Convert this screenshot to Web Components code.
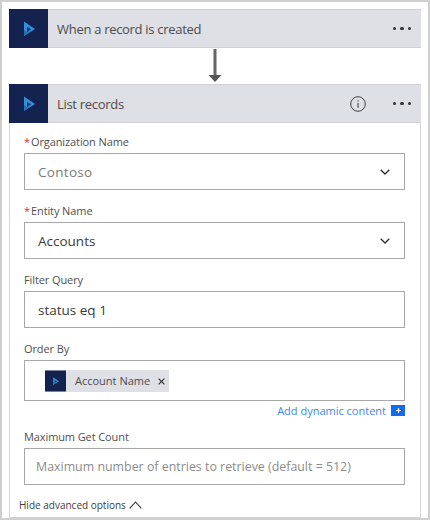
<!DOCTYPE html>
<html>
<head>
<meta charset="utf-8">
<title>List records</title>
<style>
    html, body { margin: 0; padding: 0; background: #fff; }
    body { width: 430px; height: 520px; overflow: hidden; font-family: "Open Sans", "Noto Sans", sans-serif; }
</style>
</head>
<body>
<flow-window>
    <flow-card title="When a record is created"></flow-card>
    <flow-arrow></flow-arrow>
    <flow-card title="List records" info open>
        <flow-field label="Organization Name" required select muted>Contoso</flow-field>
        <flow-field label="Entity Name" required select>Accounts</flow-field>
        <flow-field label="Filter Query">status eq 1</flow-field>
        <flow-field label="Order By" tall>
            <flow-token>Account Name</flow-token>
        </flow-field>
        <flow-dynamic></flow-dynamic>
        <flow-field label="Maximum Get Count" placeholder>Maximum number of entries to retrieve (default = 512)</flow-field>
        <flow-toggle>Hide advanced options</flow-toggle>
    </flow-card>
</flow-window>

<script>
// dynamics logo, used in the card headers and in the token
const logo = `
    <svg viewBox="0 0 39 39" width="100%" height="100%" style="display:block">
        <rect width="39" height="39" fill="#14224f"/>
        <path fill="#2f8fd8" d="M15 12.5 L26 20 L15 27 Z"/>
        <path fill="#2570b4" d="M15 27 L15 21 L19 23.5 L23 21.8 L26 20 Z"/>
        <path fill="#17366f" d="M18 17.8 L22 20.3 L18 23.2 Z"/>
    </svg>`;

class FlowWindow extends HTMLElement {
    constructor() {
        super();
        this.attachShadow({ mode: 'open' });
        this.shadowRoot.innerHTML = `
            <style>
                :host {
                    display: block;
                    box-sizing: border-box;
                    width: 430px;
                    height: 520px;
                    overflow: hidden;
                    border: 2px solid #cfcfcf;
                    padding: 7px 7px 0 7px;
                }
            </style>
            <slot></slot>`;
    }
}

class FlowCard extends HTMLElement {
    constructor() {
        super();
        this.attachShadow({ mode: 'open' });
        const info = this.hasAttribute('info') ? `
            <svg class="info" viewBox="0 0 16 16" width="16" height="16">
                <circle cx="8" cy="8" r="7.3" fill="none" stroke="#444" stroke-width="1"/>
                <rect x="7.5" y="7" width="1.1" height="4.8" fill="#444"/>
                <rect x="7.5" y="4.2" width="1.1" height="1.3" fill="#444"/>
            </svg>` : '';
        this.shadowRoot.innerHTML = `
            <style>
                :host { display: block; width: 412px; box-sizing: border-box; }
                :host([open]) { border: 1px solid #d4d4d8; border-top: 0; height: 434px; }
                header {
                    display: flex;
                    align-items: center;
                    height: 39px;
                    background: #dfe0e5;
                    color: #4b4b4f;
                    font-size: 13px;
                    letter-spacing: -.3px;
                    box-shadow: inset 0 1px 0 #d0d1d6, inset 0 -1px 0 #cfd0d5;
                }
                :host([open]) header { margin: 0 -1px; }
                .logo { width: 39px; height: 39px; flex: none; }
                .title { flex: 1; padding-left: 9px; }
                .info { margin-right: 27px; }
                .more { display: flex; gap: 4px; margin-right: 10px; }
                .more i { width: 3.5px; height: 3.5px; border-radius: 50%; background: #333; }
                .body { padding: 11px 15px 0 14px; }
                :host(:not([open])) .body { display: none; }
            </style>
            <header>
                <div class="logo">${logo}</div>
                <div class="title">${this.getAttribute('title')}</div>
                ${info}
                <div class="more"><i></i><i></i><i></i></div>
            </header>
            <div class="body"><slot></slot></div>`;
    }
}

class FlowArrow extends HTMLElement {
    constructor() {
        super();
        this.attachShadow({ mode: 'open' });
        this.shadowRoot.innerHTML = `
            <style>
                :host { display: flex; justify-content: center; height: 36px; width: 412px; }
                svg { display: block; margin-left: -1px; }
            </style>
            <svg width="14" height="36" viewBox="0 0 14 36">
                <rect x="5.5" y="1" width="3" height="27" fill="#666"/>
                <path d="M0.5 27 H13.5 L7 34 Z" fill="#555"/>
            </svg>`;
    }
}

class FlowField extends HTMLElement {
    constructor() {
        super();
        this.attachShadow({ mode: 'open' });
        const star = this.hasAttribute('required') ? '<span class="star">*</span>' : '';
        const chevron = this.hasAttribute('select') ? `
            <svg width="10" height="6" viewBox="0 0 10 6">
                <path d="M0.7 0.7 L5 5 L9.3 0.7" fill="none" stroke="#333" stroke-width="1.4"/>
            </svg>` : '';
        this.shadowRoot.innerHTML = `
            <style>
                :host { display: block; margin-bottom: 13px; }
                label { display: block; font-size: 11px; line-height: 16px; color: #505050; margin-bottom: 3px; letter-spacing: -.1px; }
                .star { color: #d13438; margin-right: 1px; }
                .box {
                    display: flex;
                    align-items: center;
                    box-sizing: border-box;
                    height: 37px;
                    padding: 0 14px 0 13px;
                    border: 1px solid #a8a8a8;
                    font-size: 13.5px;
                    color: #3b3b3b;
                }
                :host([tall]) .box { height: 41px; padding-left: 20px; }
                :host([tall]) { margin-bottom: 0; }
                :host([muted]) .box { color: #7a7a7a; letter-spacing: .3px; }
                :host([placeholder]) .box { color: #8c8c8c; font-size: 12.4px; padding-left: 11px; }
                .value { flex: 1; white-space: nowrap; }
            </style>
            <label>${star}${this.getAttribute('label')}</label>
            <div class="box"><div class="value"><slot></slot></div>${chevron}</div>`;
    }
}

class FlowToken extends HTMLElement {
    constructor() {
        super();
        this.attachShadow({ mode: 'open' });
        this.shadowRoot.innerHTML = `
            <style>
                :host {
                    display: inline-flex;
                    align-items: center;
                    height: 22px;
                    background: #dfe0e5;
                    font-size: 11px;
                    color: #4b4b4f;
                    vertical-align: middle;
                }
                .logo { width: 21px; height: 22px; margin-right: 9px; }
                .x { margin: 2px 4px 0 8px; width: 7px; height: 7px; }
            </style>
            <div class="logo">${logo}</div>
            <slot></slot>
            <svg class="x" viewBox="0 0 7 7"><path d="M.6 .6 L6.4 6.4 M6.4 .6 L.6 6.4" stroke="#333" stroke-width="1.2"/></svg>`;
    }
}

class FlowDynamic extends HTMLElement {
    constructor() {
        super();
        this.attachShadow({ mode: 'open' });
        this.shadowRoot.innerHTML = `
            <style>
                :host {
                    display: flex;
                    justify-content: flex-end;
                    align-items: center;
                    gap: 5px;
                    height: 18px;
                    margin-bottom: 10px;
                    color: #3d86f5;
                    font-size: 11px;
                }
                .plus {
                    display: flex; align-items: center; justify-content: center;
                    width: 14px; height: 11px;
                    background: #0f6cf0;
                }
            </style>
            <span>Add dynamic content</span>
            <span class="plus">
                <svg width="5" height="5" viewBox="0 0 5 5"><path d="M2.5 0 V5 M0 2.5 H5" stroke="#fff" stroke-width="1.2"/></svg>
            </span>`;
    }
}

class FlowToggle extends HTMLElement {
    constructor() {
        super();
        this.attachShadow({ mode: 'open' });
        this.shadowRoot.innerHTML = `
            <style>
                :host {
                    display: flex;
                    align-items: center;
                    gap: 3px;
                    margin: 1px 0 0 -5px;
                    font-size: 10px;
                    color: #404040;
                }
            </style>
            <slot></slot>
            <svg width="13" height="8" viewBox="0 0 13 8">
                <path d="M0.7 7.3 L6.5 1 L12.3 7.3" fill="none" stroke="#333" stroke-width="1.1"/>
            </svg>`;
    }
}

window.customElements.define('flow-window', FlowWindow);
window.customElements.define('flow-card', FlowCard);
window.customElements.define('flow-arrow', FlowArrow);
window.customElements.define('flow-field', FlowField);
window.customElements.define('flow-token', FlowToken);
window.customElements.define('flow-dynamic', FlowDynamic);
window.customElements.define('flow-toggle', FlowToggle);
</script>
</body>
</html>
